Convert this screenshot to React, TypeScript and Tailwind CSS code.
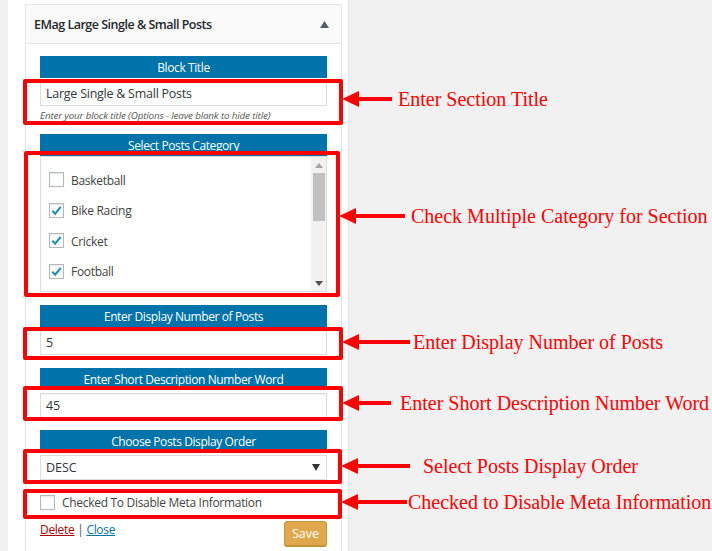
import React from "react";

const SANS = "font-['Open_Sans','Noto_Sans',sans-serif]";

function BlueHead({ children }: { children: React.ReactNode }) {
  return (
    <div className="h-[22px] pt-[2px] bg-[#0073aa] text-white text-[12px] tracking-[-0.4px] flex items-center justify-center leading-none">
      {children}
    </div>
  );
}

function TextBox({ value }: { value: string }) {
  return (
    <div className="mt-[3px] h-[25px] pt-[2px] border border-[#dddddd] bg-white flex items-center px-[5px] text-[12.5px] text-[#32373c] tracking-[-0.25px] shadow-[inset_0_1px_2px_rgba(0,0,0,0.07)]">
      {value}
    </div>
  );
}

function Check({ checked }: { checked: boolean }) {
  return (
    <div className="w-[15px] h-[15px] border border-[#b4b9be] bg-white flex items-center justify-center shadow-[inset_0_1px_2px_rgba(0,0,0,0.1)]">
      {checked && (
        <svg width="13" height="13" viewBox="0 0 20 20">
          <path d="M3.5 10.5 L8 15 L16.5 4.5" fill="none" stroke="#1e8cbe" strokeWidth="3.2" />
        </svg>
      )}
    </div>
  );
}

function Annotation({
  left,
  top,
  w,
  h,
  arrow,
  gap,
  dy,
  text,
}: {
  left: number;
  top: number;
  w: number;
  h: number;
  arrow: number;
  gap: number;
  dy: number;
  text: string;
}) {
  return (
    <div className="absolute flex items-center" style={{ left, top }}>
      <div className="border-4 border-[#ff0000] rounded-[2px]" style={{ width: w, height: h }} />
      <div className="flex items-center" style={{ marginTop: dy * 2, marginLeft: -1 }}>
        <svg width={arrow} height={18} viewBox={`0 0 ${arrow} 18`}>
          <polygon points="0,9 17,1 17,17" fill="#ff0000" />
          <line x1="14" y1="9" x2={arrow} y2="9" stroke="#ff0000" strokeWidth="4" />
        </svg>
        <span
          className="text-[#ff0000] text-[20px] leading-none whitespace-nowrap font-['Liberation_Serif','Times_New_Roman',serif]"
          style={{ marginLeft: gap }}
        >
          {text}
        </span>
      </div>
    </div>
  );
}

const notes = [
  { left: 23, top: 79, w: 320, h: 46, arrow: 50, gap: 6, dy: -3, text: "Enter Section Title" },
  { left: 24, top: 151, w: 316, h: 146, arrow: 66, gap: 6, dy: -8, text: "Check Multiple Category for Section" },
  { left: 23, top: 327, w: 320, h: 33, arrow: 68, gap: 3, dy: -2, text: "Enter Display Number of Posts" },
  { left: 23, top: 386, w: 320, h: 35, arrow: 49, gap: 9, dy: -1, text: "Enter Short Description Number Word" },
  { left: 23, top: 449, w: 319, h: 35, arrow: 69, gap: 13, dy: -1, text: "Select Posts Display Order" },
  { left: 23, top: 489, w: 319, h: 30, arrow: 66, gap: 1, dy: -2, text: "Checked to Disable Meta Information" },
];

export default function App() {
  const cats = [
    { name: "Basketball", checked: false },
    { name: "Bike Racing", checked: true },
    { name: "Cricket", checked: true },
    { name: "Football", checked: true },
  ];
  return (
    <div className={`relative w-[712px] h-[551px] overflow-hidden bg-[#f1f1f1] ${SANS}`}>
      <div className="ml-[8px] w-[341px] h-full bg-white border-r border-[#e5e5e5] pt-[4px]">
        <div className="ml-[17px] w-[317px] h-[560px] border border-[#e5e5e5] bg-white">
          <div className="h-[39px] pt-[3px] bg-[#fafafa] border-b border-[#e5e5e5] flex items-center justify-between pl-[8px] pr-[12px]">
            <span className="text-[12.5px] font-semibold text-[#23282d] tracking-[-0.5px]">
              EMag Large Single &amp; Small Posts
            </span>
            <svg width="9" height="7" viewBox="0 0 9 7" className="-mt-[3px]">
              <polygon points="4.5,0 9,7 0,7" fill="#555d66" />
            </svg>
          </div>
          <div className="pl-[14px] pr-[14px] pt-[12px]">
            <BlueHead>Block Title</BlueHead>
            <TextBox value="Large Single & Small Posts" />
            <div className="mt-[3px] text-[9.8px] italic text-[#555] leading-[13px] tracking-[-0.15px]">
              Enter your block title (Options - leave blank to hide title)
            </div>

            <div className="mt-[12px]">
              <BlueHead>Select Posts Category</BlueHead>
              <div className="h-[136px] border border-[#dddddd] bg-white flex">
                <div className="flex-1 pl-[8px] pt-[15px] flex flex-col gap-[15.5px]">
                  {cats.map((c) => (
                    <div key={c.name} className="flex items-center gap-[7px] h-[15px]">
                      <Check checked={c.checked} />
                      <span className="pt-[2px] text-[12px] text-[#444] tracking-[-0.3px]">{c.name}</span>
                    </div>
                  ))}
                </div>
                <div className="w-[15px] bg-[#f1f1f1] flex flex-col items-center">
                  <div className="h-[16px] flex items-center justify-center">
                    <svg width="8" height="5" viewBox="0 0 8 5">
                      <polygon points="4,0 8,5 0,5" fill="#a3a3a3" />
                    </svg>
                  </div>
                  <div className="w-[12px] h-[48px] bg-[#c1c1c1]" />
                  <div className="flex-1" />
                  <div className="h-[16px] flex items-center justify-center">
                    <svg width="8" height="5" viewBox="0 0 8 5">
                      <polygon points="0,0 8,0 4,5" fill="#505050" />
                    </svg>
                  </div>
                </div>
              </div>
            </div>

            <div className="mt-[13px]">
              <BlueHead>Enter Display Number of Posts</BlueHead>
              <TextBox value="5" />
            </div>

            <div className="mt-[13px]">
              <BlueHead>Enter Short Description Number Word</BlueHead>
              <TextBox value="45" />
            </div>

            <div className="mt-[12px]">
              <BlueHead>Choose Posts Display Order</BlueHead>
              <div className="mt-[3px] h-[25px] pt-[2px] border border-[#dddddd] bg-white flex items-center justify-between px-[5px] text-[12.5px] text-[#32373c] shadow-[0_1px_1px_rgba(0,0,0,0.04)]">
                <span>DESC</span>
                <svg width="8" height="7" viewBox="0 0 8 7" className="mr-[1px] -mt-[2px]">
                  <polygon points="0,0 8,0 4,7" fill="#333" />
                </svg>
              </div>
            </div>

            <div className="mt-[15px] flex items-center gap-[7px] h-[14px]">
              <Check checked={false} />
              <span className="pt-[1px] text-[12px] text-[#444] tracking-[-0.3px]">Checked To Disable Meta Information</span>
            </div>

            <div className="mt-[12px] flex items-start justify-between">
              <div className="leading-[18px] text-[12px] tracking-[-0.3px] text-[#555]">
                <a className="text-[#a00] underline">Delete</a> | <a className="text-[#0073aa] underline">Close</a>
              </div>
              <button className="w-[43px] h-[25px] pt-[1px] rounded-[3px] bg-[#e0a84c] border border-[#c69338] text-white text-[12.5px] leading-none shadow-[0_1px_0_#c69338]">
                Save
              </button>
            </div>
          </div>
        </div>
      </div>

      {notes.map((n) => (
        <Annotation key={n.text} {...n} />
      ))}
    </div>
  );
}
